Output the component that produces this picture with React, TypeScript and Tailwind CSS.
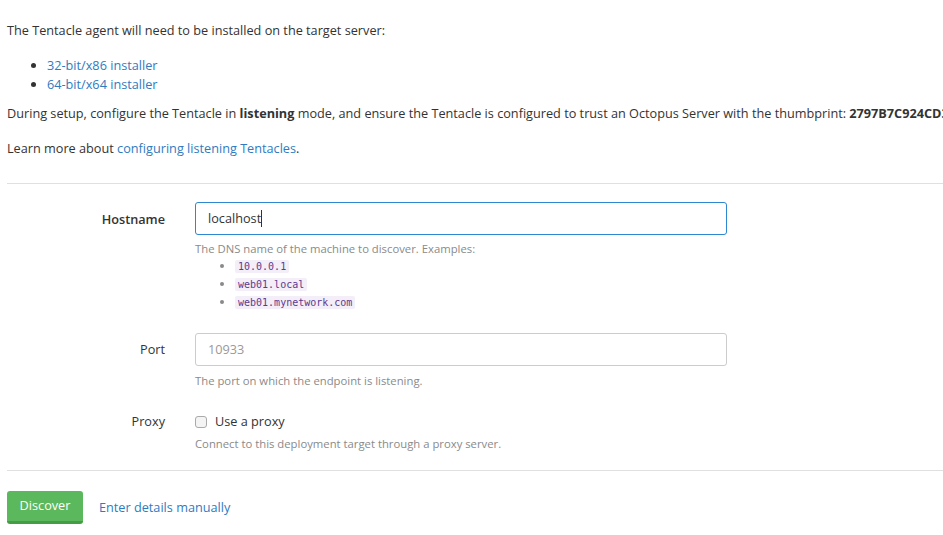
import React from "react";

const font = { fontFamily: '"Segoe UI", "Open Sans", "Noto Sans", sans-serif' };

export default function App() {
  return (
    <div className="w-[943px] h-[535px] overflow-hidden bg-white text-[12.7px] text-[#333333]" style={font}>
      <div className="pl-[7px] w-[1200px]">
        <p className="pt-[21px] leading-[19px]">The Tentacle agent will need to be installed on the target server:</p>
        <ul className="list-disc pl-[40px] mt-[16px] leading-[19px]">
          <li><a className="text-[#2f7bbf]">32-bit/x86 installer</a></li>
          <li><a className="text-[#2f7bbf]">64-bit/x64 installer</a></li>
        </ul>
        <p className="mt-[10px] leading-[19px] whitespace-nowrap">
          During setup, configure the Tentacle in <b>listening</b> mode, and ensure the Tentacle is configured to trust an Octopus Server with the thumbprint: <b>2797B7C924CD3A0B24AE1F5F6A58D3A7D8C5C1E4</b>
        </p>
        <p className="mt-[16px] leading-[19px]">
          Learn more about <a className="text-[#2f7bbf]">configuring listening Tentacles</a>.
        </p>
        <div className="mt-[25px] h-px bg-[#e0e0e0]" />

        <div className="flex mt-[18px]">
          <div className="w-[158px] text-right font-semibold pt-[8px] leading-[19px]">Hostname</div>
          <div className="ml-[30px]">
            <div className="w-[532px] h-[33px] border border-[#2e87d1] rounded-[3px] flex items-center px-[12px]">
              <span>localhost</span><span className="w-px h-[17px] bg-[#333]" />
            </div>
            <div className="text-[11.3px] text-[#8a8a8a] mt-[6px] leading-[16px]">The DNS name of the machine to discover. Examples:</div>
            <ul className="list-disc pl-[40px] text-[#8a8a8a] text-[11px]">
              {["10.0.0.1", "web01.local", "web01.mynetwork.com"].map((t) => (
                <li key={t} className="leading-[17px]">
                  <code className="bg-[#f3eef8] text-[#5d3a8e] px-[3px] py-[1px] text-[10px] rounded-[2px]" style={{ fontFamily: '"DejaVu Sans Mono", monospace' }}>{t}</code>
                </li>
              ))}
            </ul>
          </div>
        </div>

        <div className="flex mt-[22px]">
          <div className="w-[158px] text-right pt-[7px] leading-[19px]">Port</div>
          <div className="ml-[30px]">
            <div className="w-[532px] h-[33px] border border-[#cccccc] rounded-[3px] flex items-center px-[12px] text-[#999]">
              10933
            </div>
            <div className="text-[11.3px] text-[#8a8a8a] mt-[7px] leading-[16px]">The port on which the endpoint is listening.</div>
          </div>
        </div>

        <div className="flex mt-[23px]">
          <div className="w-[158px] text-right leading-[19px]">Proxy</div>
          <div className="ml-[30px]">
            <div className="flex items-center h-[19px]">
              <span className="w-[12px] h-[12px] border border-[#aaa] rounded-[3px] bg-[#f4f4f4]" />
              <span className="ml-[8px]">Use a proxy</span>
            </div>
            <div className="text-[11.3px] text-[#8a8a8a] mt-[5px] leading-[16px]">Connect to this deployment target through a proxy server.</div>
          </div>
        </div>

        <div className="mt-[18px] h-px bg-[#e0e0e0]" />

        <div className="flex items-center mt-[20px]">
          <button className="w-[76px] h-[33px] bg-[#5cb85c] border-b-[3px] border-[#449d44] text-white rounded-[3px] text-[12.7px]">Discover</button>
          <a className="ml-[16px] text-[#2f7bbf]">Enter details manually</a>
        </div>
      </div>
    </div>
  );
}
